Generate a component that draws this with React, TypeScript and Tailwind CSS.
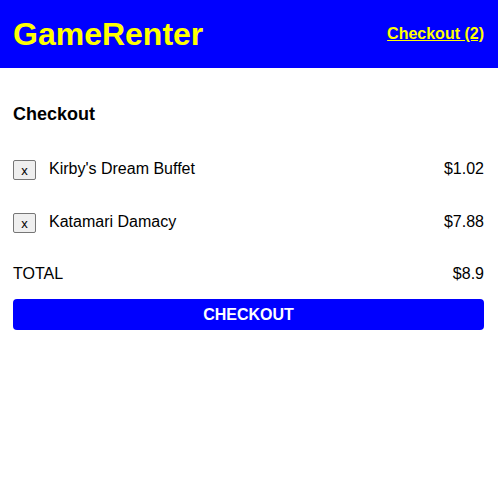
const items = [
  { name: "Kirby's Dream Buffet", price: '$1.02' },
  { name: 'Katamari Damacy', price: '$7.88' },
];

export default function App() {
  return (
    <div className="min-h-screen bg-white font-['Liberation_Sans',Arial,sans-serif] text-black">
      {/* Header */}
      <header className="flex h-[68px] items-center justify-between bg-[#0000ff] pl-[13px] pr-[14px]">
        <h1 className="text-[32px] font-bold leading-none text-[#ffff00]">GameRenter</h1>
        <a href="#" className="text-base font-bold text-[#ffff00] underline">
          Checkout (2)
        </a>
      </header>

      <main className="pl-[13px] pr-[14px]">
        <h2 className="pt-[32px] text-lg font-bold leading-7">Checkout</h2>

        <div className="mt-[29px] flex flex-col gap-[29px]">
          {items.map((item) => (
            <div key={item.name} className="flex h-6 items-center justify-between">
              <div className="flex items-center gap-[13px]">
                <button className="mt-[2px] h-5 w-[23px] rounded-[2px] border border-[#767676] bg-[#efefef] text-[13px] leading-none">
                  x
                </button>
                <span className="text-base">{item.name}</span>
              </div>
              <span className="text-base">{item.price}</span>
            </div>
          ))}
        </div>

        <div className="mt-[28px] flex h-6 items-center justify-between text-base">
          <span>TOTAL</span>
          <span>$8.9</span>
        </div>

        <button className="mt-[13px] h-[31px] w-full rounded-[4px] bg-[#0000ff] text-base font-bold text-white">
          CHECKOUT
        </button>
      </main>
    </div>
  );
}
